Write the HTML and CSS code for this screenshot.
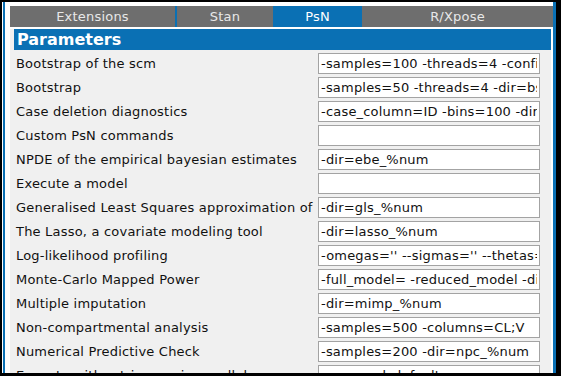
FILE: index.html
```html
<!DOCTYPE html>
<html>
<head>
<meta charset="utf-8">
<link rel="stylesheet" href="styles.css">
</head>
<body>
<div class="window">
  <div class="panel">
    <div class="tabs">
      <div class="tab tab-ext">Extensions</div>
      <div class="tab tab-stan">Stan</div>
      <div class="tab tab-psn active">PsN</div>
      <div class="tab tab-r">R/Xpose</div>
    </div>
    <div class="content">
      <div class="header">Parameters</div>
      <div class="rows">
        <div class="row"><div class="label">Bootstrap of the scm</div><input class="field" value="-samples=100 -threads=4 -config_file="></div>
        <div class="row"><div class="label">Bootstrap</div><input class="field" value="-samples=50 -threads=4 -dir=bs_%num"></div>
        <div class="row"><div class="label">Case deletion diagnostics</div><input class="field" value="-case_column=ID -bins=100 -dir=cdd_%num"></div>
        <div class="row"><div class="label">Custom PsN commands</div><input class="field" value=""></div>
        <div class="row"><div class="label">NPDE of the empirical bayesian estimates</div><input class="field" value="-dir=ebe_%num"></div>
        <div class="row"><div class="label">Execute a model</div><input class="field" value=""></div>
        <div class="row"><div class="label">Generalised Least Squares approximation of FOCE</div><input class="field" value="-dir=gls_%num"></div>
        <div class="row"><div class="label">The Lasso, a covariate modeling tool</div><input class="field" value="-dir=lasso_%num"></div>
        <div class="row"><div class="label">Log-likelihood profiling</div><input class="field" value="-omegas='' --sigmas='' --thetas='' -dir=llp_%num"></div>
        <div class="row"><div class="label">Monte-Carlo Mapped Power</div><input class="field" value="-full_model= -reduced_model -dir=mcmp_%num"></div>
        <div class="row"><div class="label">Multiple imputation</div><input class="field" value="-dir=mimp_%num"></div>
        <div class="row"><div class="label">Non-compartmental analysis</div><input class="field" value="-samples=500 -columns=CL;V"></div>
        <div class="row"><div class="label">Numerical Predictive Check</div><input class="field" value="-samples=200 -dir=npc_%num"></div>
        <div class="row"><div class="label">Execute with retries run in parallel</div><input class="field" value="-pre_seed_default"></div>
      </div>
    </div>
  </div>
</div>
</body>
</html>
```

FILE: styles.css
```css
html, body {
  margin: 0;
  padding: 0;
}
body {
  width: 561px;
  height: 376px;
  overflow: hidden;
  background: #000;
  font-family: "DejaVu Sans", Verdana, sans-serif;
  font-size: 13px;
  color: #111;
}
.window {
  box-sizing: border-box;
  width: 561px;
  height: 376px;
  border-style: solid;
  border-color: #000;
  border-width: 2px 5px 3px 2px;
  background: #fff;
  padding-left: 1px;
  display: flex;
}
.panel {
  flex: 1;
  min-width: 0;
  border-left: 2px solid #0a70b4;
  border-right: 3px solid #0a70b4;
  background: #fff;
  padding: 4px 0 0 5px;
  display: flex;
  flex-direction: column;
  overflow: hidden;
}
.tabs {
  display: flex;
  height: 21px;
  flex: none;
}
.tab {
  background: #6e6e6e;
  color: #e8e8e8;
  text-align: center;
  line-height: 21px;
  font-size: 13px;
  letter-spacing: 0.2px;
}
.tab-ext { width: 165px; }
.tab-stan { width: 96px; border-left: 2px solid #0a70b4; }
.tab-psn { width: 89px; }
.tab-r { flex: 1; }
.tab.active {
  background: #0a70b4;
  color: #fff;
}
.content {
  margin-top: 2px;
  margin-right: 2px;
  flex: 1;
  background: #f0f0f0;
  padding-left: 4px;
  overflow: hidden;
}
.header {
  background: #0a70b4;
  color: #fff;
  font-weight: bold;
  font-size: 16px;
  height: 21px;
  line-height: 21px;
  padding-left: 3px;
}
.rows {
  display: flex;
  flex-direction: column;
}
.row {
  display: flex;
  height: 24px;
  padding-top: 3px;
  box-sizing: border-box;
  align-items: center;
  flex: none;
}
.label {
  width: 300px;
  padding-left: 2px;
  margin-right: 2px;
  white-space: nowrap;
  overflow: hidden;
  line-height: 21px;
  letter-spacing: 0.2px;
}
.field {
  box-sizing: border-box;
  width: 222px;
  height: 21px;
  border: 1px solid #a3a3a3;
  background: #fff;
  padding: 0 2px;
  margin: 0;
  font-family: "DejaVu Sans", Verdana, sans-serif;
  font-size: 13px;
  letter-spacing: 0.2px;
  color: #111;
  outline: none;
}
```
